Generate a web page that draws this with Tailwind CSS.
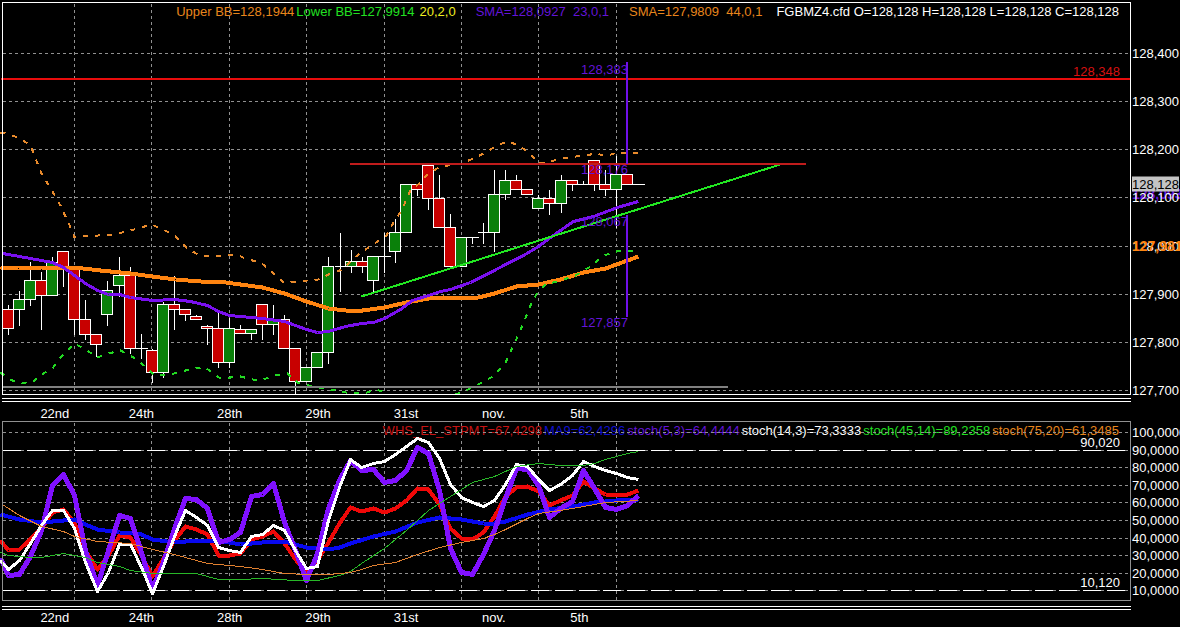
<!DOCTYPE html>
<html lang="en">
<head>
    <meta charset="UTF-8">
    <meta name="viewport" content="width=device-width, initial-scale=1.0">
    <title>FGBMZ4.cfd</title>
    <script src="https://cdn.jsdelivr.net/npm/@tailwindcss/browser@4"></script>
</head>
<body class="bg-black text-white font-['Liberation_Sans',Arial,sans-serif] text-[13px] leading-[15px]">

    <main class="h-screen flex flex-col overflow-hidden">

        <!-- Price chart -->
        <section class="flex-[395_1_0%] min-h-0 flex">
            <div class="relative flex-1 min-w-0">
                <div class="flex justify-end whitespace-pre pt-1 pr-3">
                    <span class="text-[#e8861c] mr-[2px]">Upper BB=128,1944</span>
                    <span class="text-[#22e022] mr-[5px]">Lower BB=127,9914</span>
                    <span class="text-[#f0f020] mr-5">20,2,0</span>
                    <span class="text-[#6414d8] mr-5">SMA=128,0927  23,0,1</span>
                    <span class="text-[#e8861c] mr-[14px]">SMA=127,9809  44,0,1</span>
                    <span>FGBMZ4.cfd O=128,128 H=128,128 L=128,128 C=128,128</span>
                </div>
                <svg id="price-chart" class="absolute inset-0 w-full h-full" viewBox="0 0 1131 395" preserveAspectRatio="none" fill="none" shape-rendering="crispEdges"></svg>
                <div id="price-tags"></div>
            </div>
            <div id="price-axis" class="relative w-[49px] shrink-0"></div>
        </section>
        <div class="h-[26px] shrink-0 pt-[3px] pl-[2px] pr-[49px]">
            <div class="h-1 border-y border-white"></div>
            <div class="time-axis flex pl-[3.4%] pt-1"></div>
        </div>

        <!-- Stochastic oscillators -->
        <section class="flex-[180_1_0%] min-h-0 flex">
            <div class="relative flex-1 min-w-0">
                <div class="flex justify-end whitespace-pre pt-[2px] pr-3">
                    <span class="text-[#c81414] mr-[2px]">WHS_EL_STPMT=67,4298</span>
                    <span class="text-[#1010d0] mr-[2px]">MA9=62,4296</span>
                    <span class="text-[#6414d8] mr-[2px]">stoch(5,3)=64,4444</span>
                    <span class="mr-[2px]">stoch(14,3)=73,3333</span>
                    <span class="text-[#22e022] mr-[2px]">stoch(45,14)=89,2358</span>
                    <span class="text-[#e8861c]">stoch(75,20)=61,3485</span>
                </div>
                <svg id="stoch-chart" class="absolute inset-0 w-full h-full" viewBox="0 421 1131 180" preserveAspectRatio="none" fill="none" shape-rendering="crispEdges"></svg>
                <div id="stoch-tags"></div>
            </div>
            <div id="stoch-axis" class="relative w-[49px] shrink-0"></div>
        </section>
        <div class="h-[26px] shrink-0 pt-[5px] pl-[2px] pr-[49px]">
            <div class="h-1 border-y border-white"></div>
            <div class="time-axis flex pl-[3.4%]"></div>
        </div>
    </main>

    <script>
        const WIDTH = 1131;
        const days = [74, 151, 229, 306, 384, 461, 538, 616];

        // [body top, body bottom, high, low, colour], one bar every 11.05 units
        const candles = [
            [309, 328, 304, 334, 'r'], [299, 309, 290, 325, 'g'], [280, 299, 261, 305, 'g'], [280, 295, 271, 329, 'r'],
            [262, 295, 256, 295, 'g'], [251, 267, 251, 286, 'r'], [267, 319, 267, 334, 'r'], [319, 334, 299, 339, 'r'],
            [334, 344, 334, 356, 'r'], [290, 314, 280, 325, 'g'], [275, 285, 256, 296, 'g'], [275, 348, 266, 353, 'r'],
            [348, 348, 333, 358, 'd'], [350, 372, 348, 382, 'r'], [304, 372, 301, 377, 'g'], [304, 309, 275, 329, 'r'],
            [309, 314, 309, 320, 'r'], [316, 319, 314, 319, 'r'], [326, 328, 324, 344, 'r'], [328, 362, 309, 367, 'r'],
            [328, 362, 317, 367, 'g'], [329, 333, 324, 333, 'r'], [329, 333, 329, 339, 'g'], [304, 324, 304, 339, 'r'],
            [319, 324, 304, 334, 'g'], [319, 348, 314, 348, 'r'], [348, 381, 348, 394, 'r'], [367, 381, 367, 381, 'g'],
            [352, 367, 352, 367, 'g'], [266, 352, 256, 363, 'g'], [266, 266, 232, 291, 'd'], [261, 266, 249, 272, 'g'],
            [261, 266, 256, 272, 'r'], [256, 280, 256, 291, 'g'], [256, 256, 232, 272, 'd'], [232, 251, 218, 262, 'g'],
            [184, 232, 184, 232, 'g'], [184, 189, 184, 195, 'r'], [165, 198, 165, 209, 'r'], [198, 227, 174, 227, 'r'],
            [227, 266, 213, 266, 'r'], [237, 266, 237, 266, 'g'], [237, 237, 237, 243, 'd'], [232, 232, 222, 243, 'd'],
            [194, 232, 169, 251, 'g'], [180, 194, 169, 199, 'g'], [180, 189, 174, 189, 'r'], [189, 194, 189, 194, 'r'],
            [198, 208, 194, 208, 'g'], [198, 203, 189, 214, 'r'], [180, 203, 174, 212, 'g'], [180, 184, 180, 190, 'r'],
            [184, 184, 180, 184, 'd'], [160, 184, 160, 190, 'r'], [184, 189, 169, 195, 'r'], [174, 189, 155, 227, 'g'],
            [174, 184, 174, 184, 'r'], [184, 184, 184, 184, 'd']
        ];

        const upperBand = '0,132 5,133 18,137 30,145 41,173 52,191 60,205 65,216 71,229 74,237 82,236 113,234 130,230 151,224 163,229 175,236 186,247 197,254 210,256 235,254 248,259 260,262 270,270 280,279 284,283 295,281 318,279 328,274 342,269 353,258 365,249 377,241 386,235 393,222 401,210 410,190 420,182 428,173 440,166 461,163 473,158 485,152 498,144 508,141 520,146 530,154 538,163 550,161 560,158 583,155 597,153 605,156 616,152 638,152';
        const lowerBand = '0,372 8,378 16,382 30,383 41,374 52,368 61,356 74,343 85,349 97,357 108,353 120,350 133,357 145,366 153,374 170,374 180,371 195,368 205,367 214,374 218,377 230,377 240,376 252,379 263,379 273,375 287,373 297,382 312,386 330,389 345,392 355,393 367,392 375,389 386,392';
        const lowerBandEnd = '455,394 461,392 472,387 483,381 494,375 505,362 513,345 522,325 530,305 538,290 545,284 560,280 575,275 590,266 603,255 616,251 638,250';
        const sma44 = '0,267 18,268 41,267 74,267 100,270 130,273 152,276 175,279 200,281 218,281 240,284 262,287 284,293 306,301 328,308 345,310 362,310 384,307 406,302 428,298 443,297 453,298 478,297 494,293 516,286 538,284 560,279 583,272 605,268 627,260 638,256';
        const sma23 = '2,253 8,254 30,258 52,262 63,267 74,275 85,283 97,290 108,294 119,294 130,297 152,300 174,299 190,301 207,305 218,311 229,315 240,316 262,318 284,321 295,325 306,329 317,332 328,331 345,326 361,323 373,322 384,318 400,309 412,300 428,295 440,291 450,289 470,282 490,272 507,263 523,255 538,246 557,232 573,221 593,216 617,207 638,201';

        const stoch5 = '0,558 8,575 19,574 30,556 41,530 52,485 63,474 74,495 85,550 97,585 108,550 119,515 130,518 141,552 152,589 163,562 174,528 185,498 196,499 207,508 218,542 229,539 240,532 251,496 262,494 273,483 284,522 295,550 306,580 317,553 328,508 339,480 350,460 361,470 373,469 384,482 395,480 406,470 417,447 428,453 439,490 450,548 461,572 472,574 483,554 494,530 505,498 516,468 527,469 538,485 549,517 560,508 572,501 583,470 594,488 605,507 616,509 627,505 638,495';
        const stoch14 = '0,560 8,569 19,560 30,543 41,525 52,510 63,510 74,528 85,562 97,591 108,572 119,544 130,544 141,567 152,593 163,566 174,536 185,510 196,517 207,525 218,547 229,550 240,552 251,536 262,534 273,525 284,530 295,550 306,568 317,566 328,520 339,487 350,459 361,467 373,463 384,461 395,454 406,446 417,438 428,442 439,458 450,484 461,497 472,502 483,506 494,500 505,484 516,464 527,466 538,479 549,490 560,484 572,475 583,461 594,466 605,470 616,473 627,477 638,479';
        const whs = '0,540 8,550 19,549 41,528 52,512 63,509 74,522 85,550 97,569 108,555 119,535 130,537 141,555 152,576 163,558 174,540 185,526 196,529 207,534 218,555 229,555 240,553 251,539 262,536 273,531 284,543 295,559 306,572 317,560 328,542 339,523 350,507 361,511 373,508 384,512 395,508 406,500 417,488 428,489 439,504 450,528 461,538 472,539 483,532 494,516 505,496 516,487 527,486 538,491 549,505 560,500 572,495 583,481 594,488 605,494 627,494 638,490';
        const ma9 = '0,514 19,519 41,522 63,520 74,519 85,524 97,529 119,532 130,532 141,534 152,539 174,542 196,540 218,540 240,544 262,542 284,541 306,547 328,549 339,547 350,543 373,536 395,531 417,522 439,517 461,519 483,523 494,523 505,521 527,514 549,509 572,506 594,502 616,500 638,499';
        const stoch45 = '0,552 8,555 30,557 41,557 63,553 85,557 97,562 119,566 130,570 152,573 196,573 218,579 240,579 262,578 295,580 317,580 339,575 350,571 361,563 384,548 406,530 428,510 450,496 472,482 494,476 516,466 538,463 560,465 583,465 594,463 605,459 627,453 638,451';
        const stoch75 = '2,504 19,515 41,526 63,531 74,536 97,541 130,543 152,549 174,554 207,563 240,566 262,569 284,573 306,574 328,574 350,572 361,569 373,565 395,562 417,554 439,547 461,542 483,538 494,534 505,529 527,518 538,513 560,510 583,506 605,502 638,500';

        function line(x1, y1, x2, y2, color, width = 1, dash = '') {
            return `<path d="M${x1} ${y1}L${x2} ${y2}" stroke="${color}" stroke-width="${width}" stroke-dasharray="${dash}" vector-effect="non-scaling-stroke"/>`;
        }

        function curve(points, color, width, dash = '') {
            return `<polyline points="${points}" stroke="${color}" stroke-width="${width}" stroke-dasharray="${dash}" stroke-linejoin="round" vector-effect="non-scaling-stroke"/>`;
        }

        function grid(rows, top, bottom) {
            return rows.map(y => line(2, y, 1128, y, '#909090', 1, '3 3')).join('')
                + days.map(x => line(x, top, x, bottom, '#909090', 1, '3 3')).join('');
        }

        function drawCandles() {
            const fills = { r: '#c80000', g: '#0a800a' };
            return candles.map(([top, bottom, high, low, kind], i) => {
                const x = Math.round(8 + i * 11.05);
                const wick = high < low ? line(x, high, x, low, '#fff') : '';
                if (kind === 'd') {
                    return wick + line(x - 6, top, x + 6, top, '#fff');
                }
                return wick + `<rect x="${x - 6}" y="${top}" width="11" height="${bottom - top}" fill="${fills[kind]}" stroke="#fff" vector-effect="non-scaling-stroke"/>`;
            }).join('');
        }

        // Places [text, y, colour classes] entries down an axis
        function drawAxis(id, labels, top, height) {
            document.getElementById(id).innerHTML = labels.map(([text, y, cls = '']) =>
                `<span class="absolute left-px -translate-y-1/2 ${cls}" style="top:${(y - top) / height * 100}%">${text}</span>`).join('');
        }

        function drawTags(id, labels, top, height) {
            document.getElementById(id).innerHTML = labels.map(([text, x, y, cls]) =>
                `<span class="absolute -translate-x-full -translate-y-1/2 ${cls}" style="left:${x / WIDTH * 100}%;top:${(y - top) / height * 100}%">${text}</span>`).join('');
        }

        document.getElementById('price-chart').innerHTML = `<g transform="translate(.5 .5)">`
            + grid([53, 101, 149, 197, 246, 294, 342, 390], 3, 394)
            + drawCandles()
            + curve(sma44, '#ff8410', 4)
            + curve(sma23, '#7a10f0', 3)
            + curve(upperBand, '#e88a2c', 2, '5 7')
            + curve(lowerBand, '#22d822', 2, '5 7')
            + curve(lowerBandEnd, '#22d822', 2, '5 7')
            + line(361, 296, 783, 163, '#22e822', 2)
            + line(0, 78.5, 1130, 78.5, '#e80c0c', 2)
            + line(349, 163.5, 805, 163.5, '#c01c1c', 2)
            + line(2, 386.5, 727, 386.5, '#808080', 2)
            + line(626.5, 61, 626.5, 163, '#7010e8', 2)
            + line(626.5, 214, 626.5, 316, '#7010e8', 2)
            + `<path d="M2 2H1130V394H2Z" stroke="#fff" vector-effect="non-scaling-stroke"/></g>`;

        document.getElementById('stoch-chart').innerHTML = `<g transform="translate(.5 .5)">`
            + grid([432, 450, 467, 485, 502, 520, 538, 555, 573, 590], 422, 600)
            + line(2, 450, 1128, 450, '#fff', 1, '18 6')
            + line(2, 590, 1128, 590, '#fff', 1, '18 6')
            + curve(whs, '#f00808', 4)
            + curve(ma9, '#0808f0', 4)
            + curve(stoch5, '#8010ff', 5)
            + curve(stoch14, '#fff', 3)
            + curve(stoch45, '#28b828', 1)
            + curve(stoch75, '#e08030', 1)
            + `<path d="M2 421H1130V600H2Z" stroke="#909090" vector-effect="non-scaling-stroke"/></g>`;

        drawTags('price-tags', [
            ['128,383', 628, 69, 'text-[#6414d8]'],
            ['128,176', 628, 169, 'text-[#6414d8]'],
            ['128,067', 628, 221, 'text-[#6414d8]'],
            ['127,857', 628, 322, 'text-[#6414d8]'],
            ['128,348', 1120, 71, 'text-[#d81010]']
        ], 0, 395);
        drawTags('stoch-tags', [
            ['90,020', 1120, 442, 'text-white'],
            ['10,120', 1120, 582, 'text-white']
        ], 421, 180);

        drawAxis('price-axis', [
            ['128,400', 53], ['128,300', 101], ['128,200', 149],
            ['128,093', 194, 'font-bold text-sm text-[#6414d8]'],
            ['128,100', 197],
            ['128,128', 184, 'bg-[#c4c4c4] text-black w-[47px]'],
            ['128,000', 246],
            ['127,981', 246, 'font-bold text-sm text-[#ff8410]'],
            ['127,900', 294], ['127,800', 342], ['127,700', 390]
        ], 0, 395);
        drawAxis('stoch-axis', [
            ['100,0000', 432], ['90,0000', 450], ['80,0000', 467], ['70,0000', 485], ['60,0000', 502],
            ['50,0000', 520], ['40,0000', 538], ['30,0000', 555], ['20,0000', 573], ['10,0000', 590]
        ], 421, 180);

        document.querySelectorAll('.time-axis').forEach(row => {
            row.innerHTML = ['22nd', '24th', '28th', '29th', '31st', 'nov.', '5th']
                .map(day => `<span class="w-[8.1%]">${day}</span>`).join('');
        });
    </script>
</body>
</html>
